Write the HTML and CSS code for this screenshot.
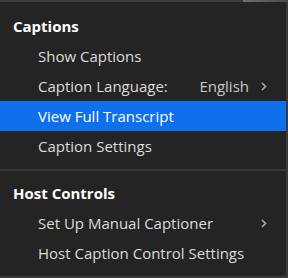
FILE: index.html
```html
<!DOCTYPE html>
<html lang="en">
    <head>
        <meta charset="UTF-8">
        <title>Captions Menu</title>
        <link rel="stylesheet" href="styles.css">
    </head>

    <body>

        <div class="top_strip">
            <div class="strip_left"></div>
            <div class="strip_right"></div>
        </div>

        <div class="menu">

            <div class="section">
                <p class="heading">Captions</p>
                <div class="item"><span>Show Captions</span></div>
                <div class="item">
                    <span>Caption Language:</span>
                    <span class="value">English</span>
                    <svg class="chevron" width="6" height="9" viewBox="0 0 6 9"><polyline points="1,1 4.5,4.5 1,8" fill="none" stroke="#a8a8a8" stroke-width="1.6"/></svg>
                </div>
                <div class="item active"><span>View Full Transcript</span></div>
                <div class="item"><span>Caption Settings</span></div>
            </div>

            <div class="divider"></div>

            <div class="section">
                <p class="heading">Host Controls</p>
                <div class="item">
                    <span>Set Up Manual Captioner</span>
                    <svg class="chevron push" width="6" height="9" viewBox="0 0 6 9"><polyline points="1,1 4.5,4.5 1,8" fill="none" stroke="#a8a8a8" stroke-width="1.6"/></svg>
                </div>
                <div class="item"><span>Host Caption Control Settings</span></div>
            </div>

        </div>

    </body>
</html>
```

FILE: styles.css
```css
body {
    margin: 0;
    background-color: #3a3a3a;
    overflow: hidden; /* Hide scrollbars */
    font-family: 'Open Sans', 'Noto Sans', sans-serif;
}

.top_strip {
    display: flex;
    height: 2px;
}

.strip_left {
    flex: 1;
    background-color: #3c3c3c;
}

.strip_right {
    width: 45px;
    background: linear-gradient(to right, #6e6e6e, #4a4a4a);
}

.menu {
    width: 286px;
    height: 274px;
    box-sizing: border-box;
    background-color: #242424;
    padding-top: 10px;
}

.heading {
    margin: 0;
    height: 29px;
    line-height: 29px;
    padding-left: 13px;
    font-size: 15px;
    font-weight: 700;
    color: #ffffff;
}

.item {
    display: flex;
    align-items: center;
    height: 30px;
    padding-left: 38px;
    padding-right: 19px;
    font-size: 15px;
    color: #dcdcdc;
}

.item.active {
    background-color: #0e71eb;
    color: #ffffff;
}

.value {
    margin-left: auto;
    color: #c8c8c8;
}

.chevron {
    margin-left: 12px;
}

.chevron.push {
    margin-left: auto;
}

.divider {
    height: 2px;
    margin: 8px 0;
    background-color: #363636;
}
```
